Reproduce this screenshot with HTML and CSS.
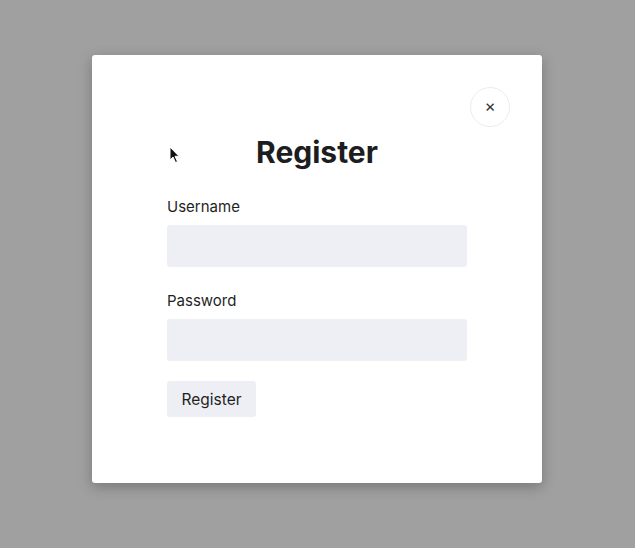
FILE: index.html
```html
<html>
  <head>
    <title>Register</title>
    <link rel="stylesheet" href="styles.css">
  </head>
  <body>
    <div id="overlay">
      <div id="modal">
        <button class="close" type="button">&times;</button>
        <svg class="pointer" width="12" height="18" viewBox="0 0 12 18">
          <path d="M1 1 L1 14 L4 11 L6.5 16.5 L8.5 15.6 L6 10.3 L10 10.3 Z" fill="#111" stroke="#fff" stroke-width="1"/>
        </svg>
        <form id="form">
          <h1 class="title">Register</h1>
          <label class="label" for="username">Username</label>
          <input class="field" id="username" type="text" />
          <label class="label" for="password">Password</label>
          <input class="field" id="password" type="password" />
          <button class="submit" type="button">Register</button>
        </form>
      </div>
    </div>
  </body>
</html>
```

FILE: styles.css
```css
body {
  margin: 0;
  background-color: #a0a0a0;
  font-family: Inter, "Liberation Sans", sans-serif;
  color: #1f1f1f;
}
#overlay {
  height: 548px;
  padding-top: 55px;
  padding-left: 92px;
  box-sizing: border-box;
}
#modal {
  position: relative;
  width: 450px;
  height: 428px;
  background-color: #fff;
  border-radius: 3px;
  box-shadow: 0 4px 14px rgba(0, 0, 0, 0.25);
  box-sizing: border-box;
  padding: 79px 75px 0 75px;
}
.close {
  position: absolute;
  top: 32px;
  right: 32px;
  width: 40px;
  height: 40px;
  border: 1px solid #ececec;
  border-radius: 50%;
  background: #fff;
  font-family: Inter, "Liberation Sans", sans-serif;
  font-size: 17px;
  line-height: 1;
  color: #333;
  padding: 0 0 2px 0;
}
.pointer {
  position: absolute;
  left: 77px;
  top: 91px;
}
#form {
  display: flex;
  flex-direction: column;
  align-items: flex-start;
  width: 300px;
}
.title {
  align-self: stretch;
  text-align: center;
  margin: 0 0 27px 0;
  font-size: 30px;
  font-weight: 700;
  line-height: 36px;
  color: #1d1d1f;
}
.label {
  font-size: 15px;
  line-height: 19px;
  margin-bottom: 9px;
}
.field {
  width: 300px;
  height: 42px;
  border: none;
  border-radius: 3px;
  background-color: #eeeff4;
  margin: 0 0 24px 0;
}
#password {
  margin-bottom: 20px;
}
.submit {
  height: 36px;
  padding: 0 14.5px;
  border: none;
  border-radius: 3px;
  background-color: #eeeff4;
  font-family: Inter, "Liberation Sans", sans-serif;
  font-size: 15.5px;
  color: #1f1f1f;
}
```
